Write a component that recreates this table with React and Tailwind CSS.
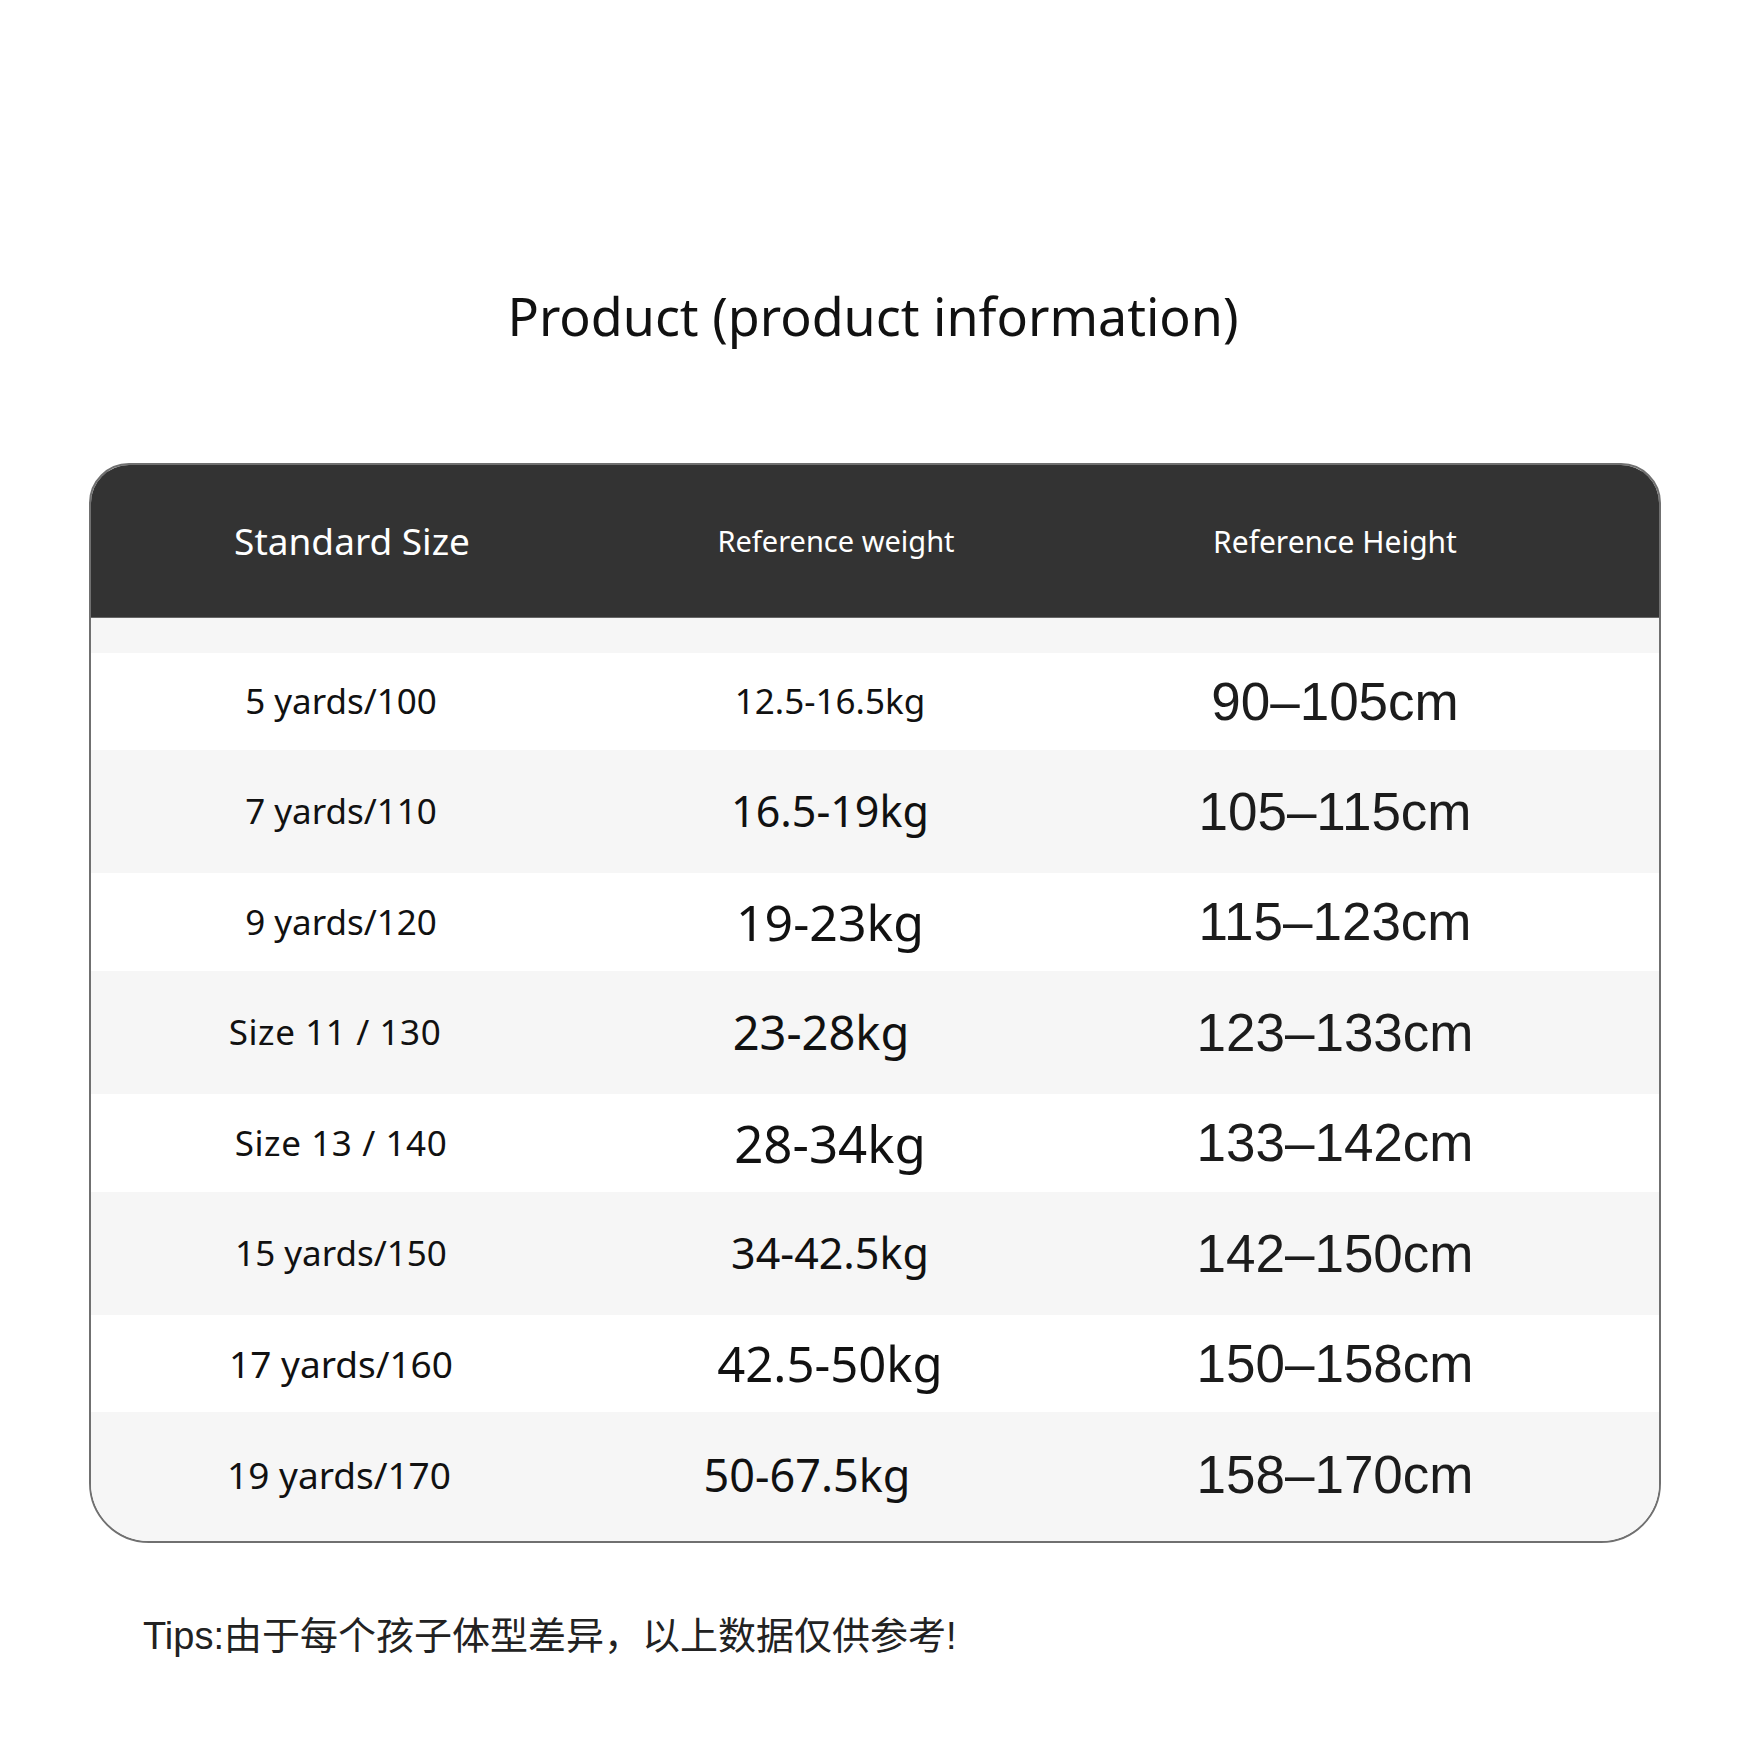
const rows = [
  { size: '5 yards/100', sizeCls: 'text-[35px]', weight: '12.5-16.5kg', weightCls: 'text-[35px]', height: '90–105cm', rowCls: 'h-[97px] bg-white' },
  { size: '7 yards/110', sizeCls: 'text-[35px]', weight: '16.5-19kg', weightCls: 'text-[43px]', height: '105–115cm', rowCls: 'h-[123px] bg-[#f6f6f6]' },
  { size: '9 yards/120', sizeCls: 'text-[35px]', weight: '19-23kg', weightCls: 'text-[50px]', height: '115–123cm', rowCls: 'h-[98px] bg-white' },
  { size: 'Size 11 / 130', sizeCls: 'text-[35px] tracking-[0.6px] pr-[12px]', weight: '23-28kg', weightCls: 'text-[47px] pr-[18px]', height: '123–133cm', rowCls: 'h-[123px] bg-[#f6f6f6]' },
  { size: 'Size 13 / 140', sizeCls: 'text-[35px] tracking-[0.6px]', weight: '28-34kg', weightCls: 'text-[51px]', height: '133–142cm', rowCls: 'h-[98px] bg-white' },
  { size: '15 yards/150', sizeCls: 'text-[35px]', weight: '34-42.5kg', weightCls: 'text-[43px]', height: '142–150cm', rowCls: 'h-[123px] bg-[#f6f6f6]' },
  { size: '17 yards/160', sizeCls: 'text-[37px]', weight: '42.5-50kg', weightCls: 'text-[49px]', height: '150–158cm', rowCls: 'h-[97px] bg-white' },
  { size: '19 yards/170', sizeCls: 'text-[37px] pr-[4px]', weight: '50-67.5kg', weightCls: 'text-[45px] pr-[46px]', height: '158–170cm', rowCls: 'h-[129px] bg-[#f6f6f6] pb-[4px]' },
]

export default function App() {
  return (
    <div className="w-[1750px] h-[1750px] bg-white font-['Noto_Sans',sans-serif] text-[#111]">
      <div className="pt-[286px] flex justify-center">
        <h1 className="text-[52px] leading-[60px] font-normal pr-[4px]">Product (product information)</h1>
      </div>

      <div className="mt-[117px] ml-[89px] w-[1572px] border-2 border-[#707070] rounded-t-[40px] rounded-b-[60px] overflow-hidden bg-white">
        <div className="h-[152px] bg-[#333333] text-white grid grid-cols-[500px_478px_532px] items-center">
          <div className="text-center text-[37px] pl-[22px]">Standard Size</div>
          <div className="text-center text-[29px] pl-[12px]">Reference weight</div>
          <div className="text-center text-[30px]">Reference Height</div>
        </div>
        <div className="h-[36px] bg-[#f6f6f6] border-t border-[#666]" />
        {rows.map((r) => (
          <div key={r.size} className={`grid grid-cols-[500px_478px_532px] items-center ${r.rowCls}`}>
            <div className={`text-center ${r.sizeCls}`}>{r.size}</div>
            <div className={`text-center ${r.weightCls}`}>{r.weight}</div>
            <div className="text-center text-[53px] text-[#1c1c1c] font-['Liberation_Sans',sans-serif]">{r.height}</div>
          </div>
        ))}
      </div>

      <div className="mt-[71px] ml-[143px] text-[38px] leading-[44px] text-[#222] font-['Liberation_Sans','Noto_Sans_CJK_SC',sans-serif]">
        Tips:由于每个孩子体型差异，以上数据仅供参考!
      </div>
    </div>
  )
}
